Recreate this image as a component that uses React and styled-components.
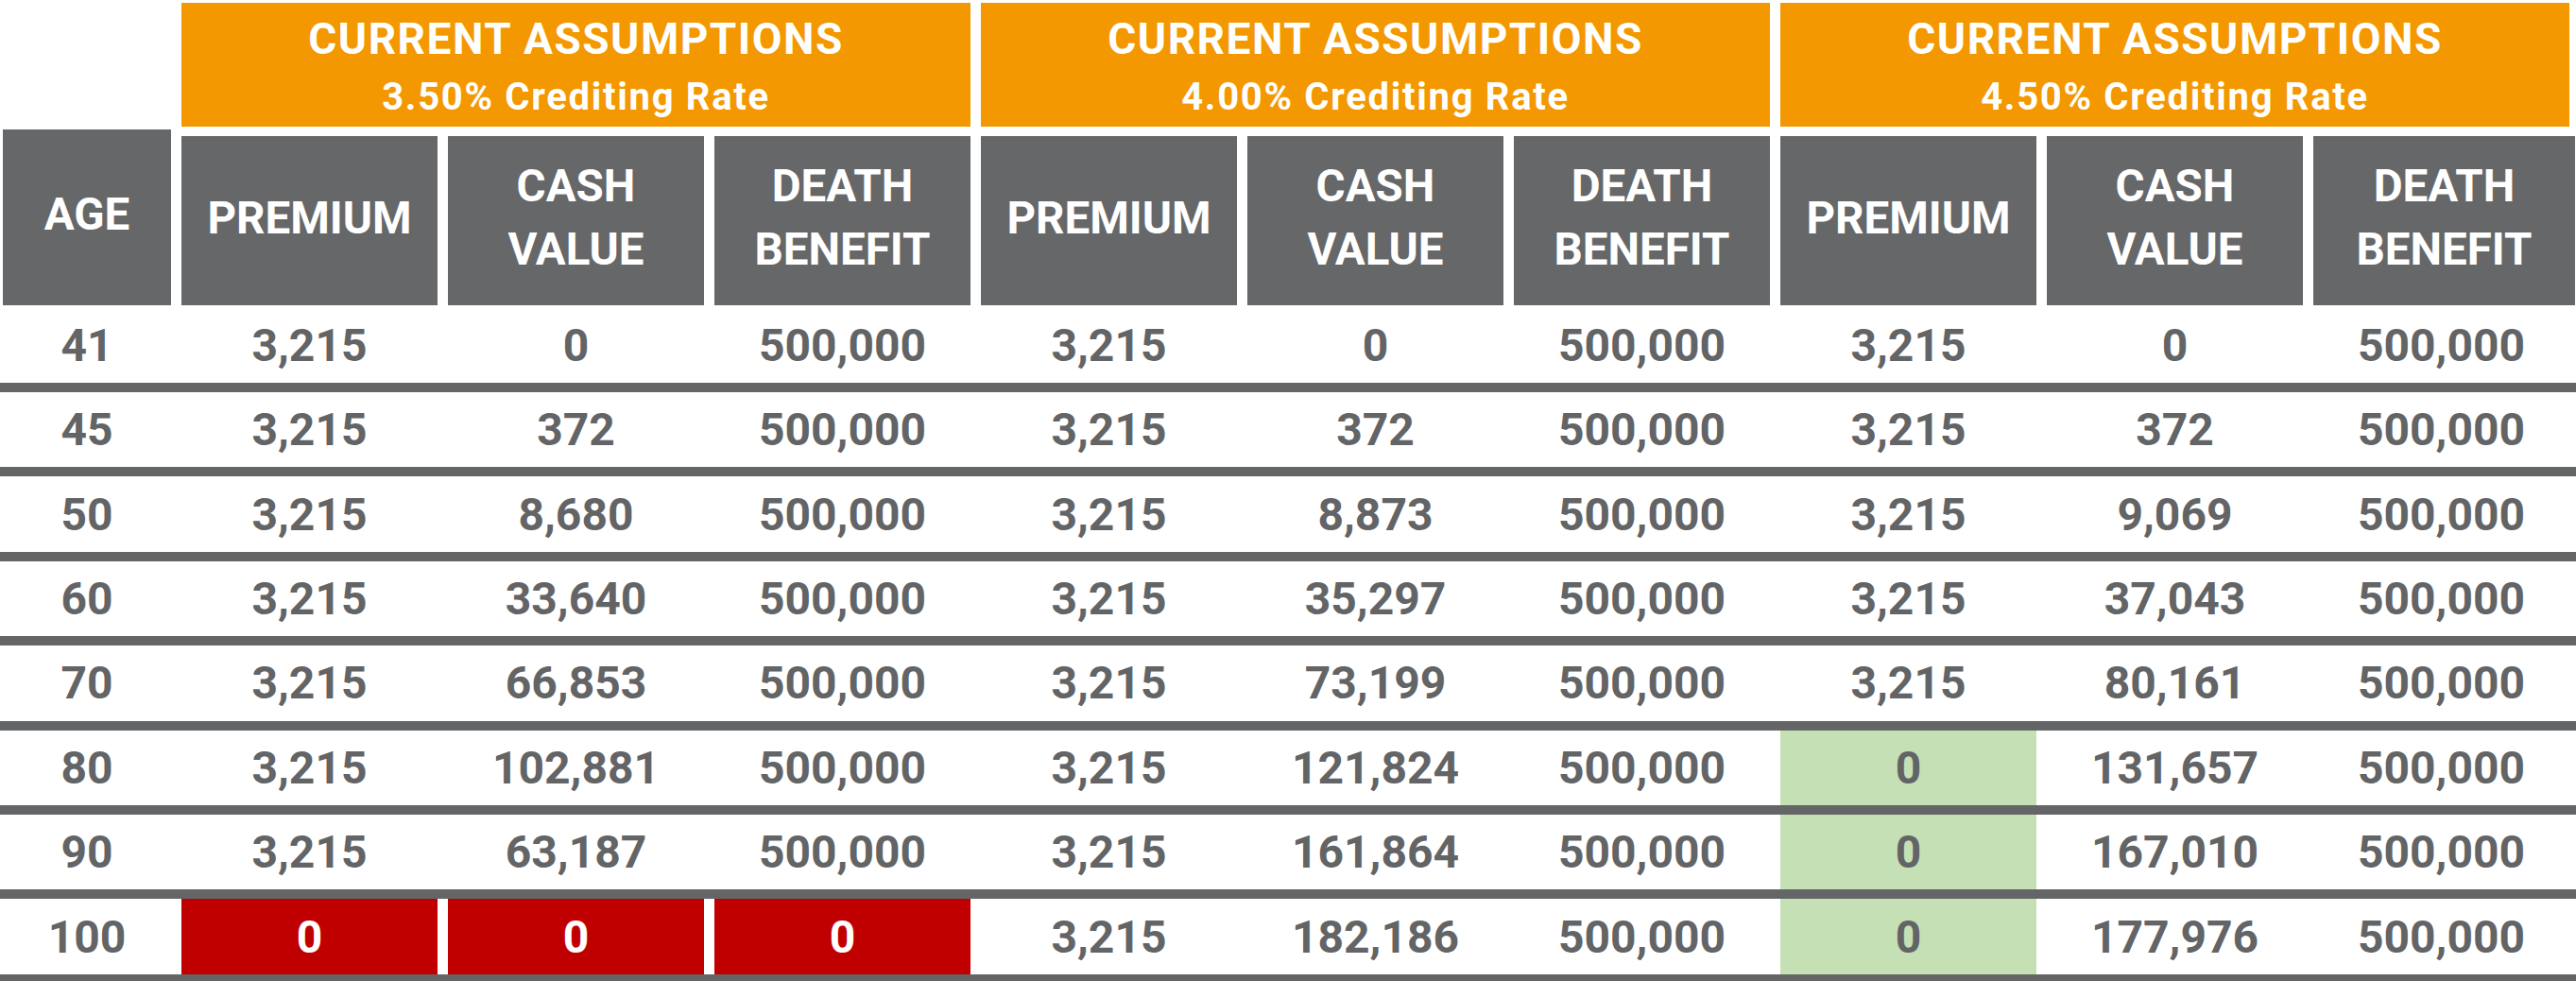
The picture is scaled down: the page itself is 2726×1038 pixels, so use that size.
import styled, { createGlobalStyle } from 'styled-components';

const GlobalStyle = createGlobalStyle`
  html, body {
    margin: 0;
    padding: 0;
    background: #ffffff;
  }
  body {
    font-family: Roboto, "Liberation Sans", Arial, sans-serif;
    overflow: hidden;
  }
`;

const ORANGE = '#f39800';
const SLATE = '#666769';
const RULE = '#646567';
const INK = '#636466';

const Page = styled.div`
  width: 2726px;
  padding-top: 3px;
`;

const HeadGrid = styled.div`
  display: grid;
  grid-template-columns: 178px repeat(9, 271px);
  grid-template-rows: 131px 179px;
  column-gap: 11px;
  row-gap: 10px;
  padding-left: 3px;
`;

const Blank = styled.div``;

const Scenario = styled.div`
  grid-column: span 3;
  background: ${ORANGE};
  color: #ffffff;
  text-align: center;
  font-weight: 700;
  padding-top: 10px;
  box-sizing: border-box;
  overflow: hidden;
`;

const ScenarioTitle = styled.div`
  font-size: 46px;
  line-height: 56px;
  letter-spacing: 1.5px;
`;

const ScenarioRate = styled.div`
  font-size: 40px;
  line-height: 48px;
  letter-spacing: 1.7px;
  margin-top: 10px;
`;

const ColHead = styled.div`
  background: ${SLATE};
  color: #ffffff;
  font-size: 47.5px;
  font-weight: 700;
  line-height: 67px;
  text-align: center;
  display: flex;
  align-items: center;
  justify-content: center;
  box-sizing: border-box;
  padding-bottom: 5px;
  margin-top: ${({ $tall }) => ($tall ? '-7px' : '0')};
  margin-right: ${({ $bleed }) => ($bleed ? '-6px' : '0')};
`;

const Body = styled.div`
  margin-top: 2.6px;
`;

const Row = styled.div`
  display: grid;
  grid-template-columns: 178px repeat(9, 271px);
  column-gap: 11px;
  padding-left: 3px;
  height: 79.4px;
  border-bottom: 10px solid ${RULE};
`;

const tones = {
  plain: { bg: 'transparent', fg: INK },
  loss: { bg: '#c00000', fg: '#ffffff' },
  paid: { bg: '#c5e0b4', fg: INK },
};

const Cell = styled.div`
  display: flex;
  align-items: center;
  justify-content: center;
  font-size: 48px;
  font-weight: 700;
  background: ${({ $tone }) => tones[$tone].bg};
  color: ${({ $tone }) => tones[$tone].fg};
`;

const scenarios = [
  { title: 'CURRENT ASSUMPTIONS', rate: '3.50% Crediting Rate' },
  { title: 'CURRENT ASSUMPTIONS', rate: '4.00% Crediting Rate' },
  { title: 'CURRENT ASSUMPTIONS', rate: '4.50% Crediting Rate' },
];

const columns = [
  ['PREMIUM'],
  ['CASH', 'VALUE'],
  ['DEATH', 'BENEFIT'],
];

// each cell: value, or [value, tone]
const rows = [
  ['41', '3,215', '0', '500,000', '3,215', '0', '500,000', '3,215', '0', '500,000'],
  ['45', '3,215', '372', '500,000', '3,215', '372', '500,000', '3,215', '372', '500,000'],
  ['50', '3,215', '8,680', '500,000', '3,215', '8,873', '500,000', '3,215', '9,069', '500,000'],
  ['60', '3,215', '33,640', '500,000', '3,215', '35,297', '500,000', '3,215', '37,043', '500,000'],
  ['70', '3,215', '66,853', '500,000', '3,215', '73,199', '500,000', '3,215', '80,161', '500,000'],
  ['80', '3,215', '102,881', '500,000', '3,215', '121,824', '500,000', ['0', 'paid'], '131,657', '500,000'],
  ['90', '3,215', '63,187', '500,000', '3,215', '161,864', '500,000', ['0', 'paid'], '167,010', '500,000'],
  ['100', ['0', 'loss'], ['0', 'loss'], ['0', 'loss'], '3,215', '182,186', '500,000', ['0', 'paid'], '177,976', '500,000'],
];

export default function App() {
  const heads = scenarios.flatMap((s, si) =>
    columns.map((lines, ci) => ({ key: `${si}-${ci}`, lines, last: si === 2 && ci === 2 }))
  );

  return (
    <Page>
      <GlobalStyle />
      <HeadGrid>
        <Blank />
        {scenarios.map((s, i) => (
          <Scenario key={i}>
            <ScenarioTitle>{s.title}</ScenarioTitle>
            <ScenarioRate>{s.rate}</ScenarioRate>
          </Scenario>
        ))}
        <ColHead $tall>AGE</ColHead>
        {heads.map((h) => (
          <ColHead key={h.key} $bleed={h.last}>
            <div>
              {h.lines.map((l) => (
                <div key={l}>{l}</div>
              ))}
            </div>
          </ColHead>
        ))}
      </HeadGrid>
      <Body>
        {rows.map((r) => (
          <Row key={r[0]}>
            {r.map((c, i) => {
              const [value, tone] = Array.isArray(c) ? c : [c, 'plain'];
              return (
                <Cell key={i} $tone={tone}>
                  {value}
                </Cell>
              );
            })}
          </Row>
        ))}
      </Body>
    </Page>
  );
}
